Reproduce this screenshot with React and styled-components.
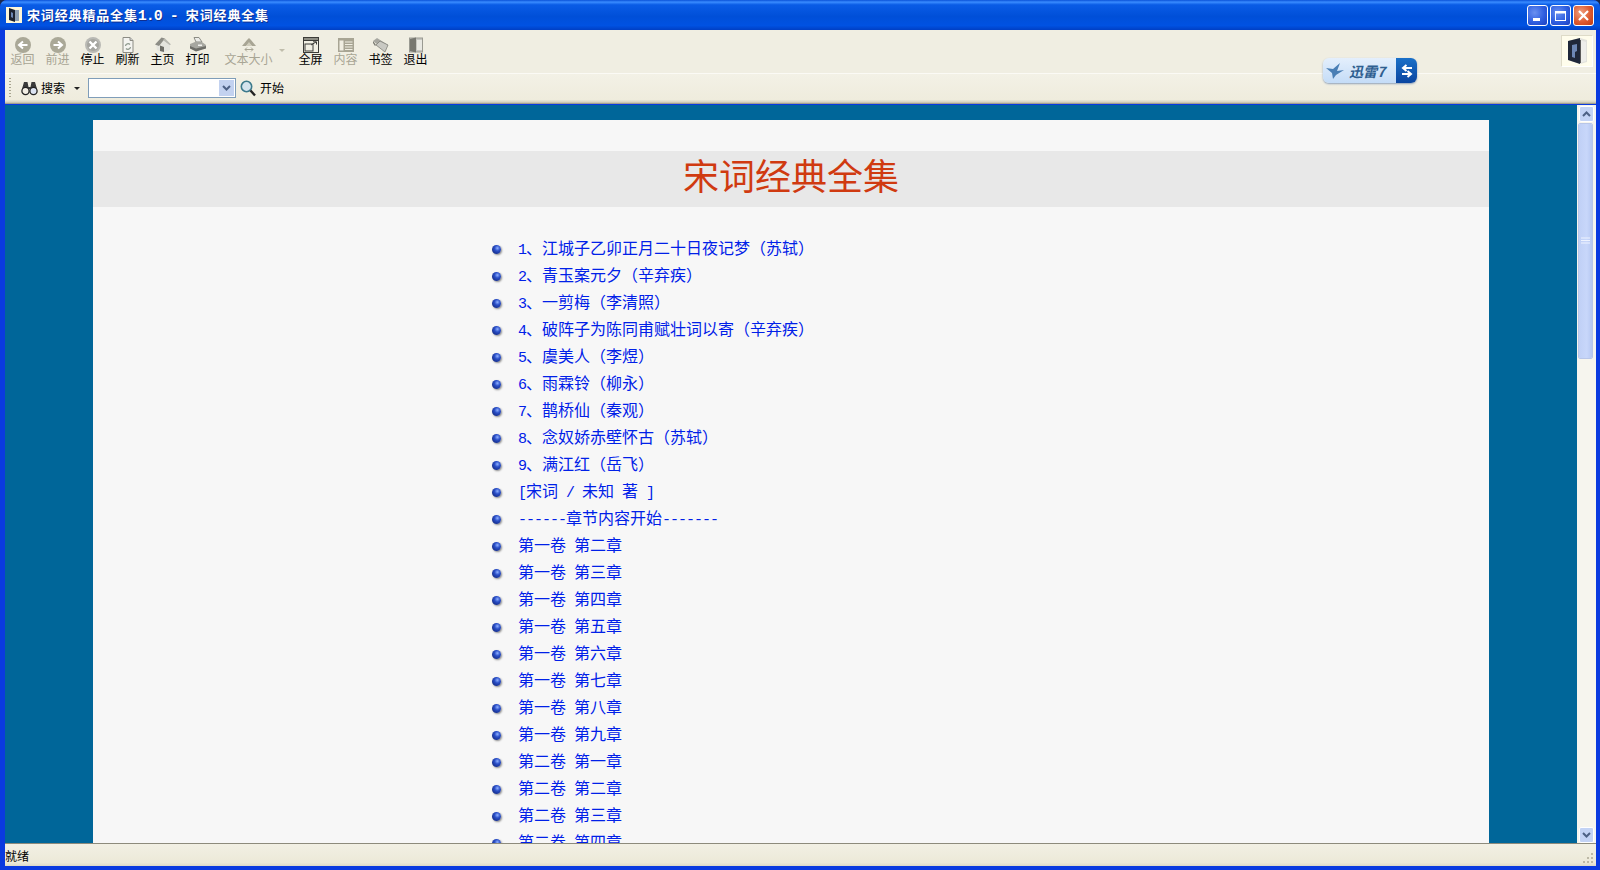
import React from 'react';
import styled, { createGlobalStyle } from 'styled-components';

const GlobalStyle = createGlobalStyle`
  html, body {
    margin: 0;
    padding: 0;
    overflow: hidden;
    background: #1a2a50;
  }
`;

const FONT = `"Noto Sans CJK SC", "Liberation Sans", sans-serif`;

const Window = styled.div`
  position: relative;
  width: 1600px;
  height: 870px;
  display: flex;
  flex-direction: column;
  background: #0a3ae0;
  border-radius: 7px 7px 0 0;
  font-family: ${FONT};
  overflow: hidden;
`;

const TitleBar = styled.div`
  height: 30px;
  flex: none;
  display: flex;
  align-items: center;
  padding: 0 6px;
  background: linear-gradient(180deg, #0a52d8 0%, #3a8cff 7%, #0a5ce6 16%, #004fd8 55%, #0052e2 85%, #003fc4 100%);
`;

const TitleText = styled.div`
  margin-left: 5px;
  font-size: 13px;
  letter-spacing: 0.85px;
  color: #fff;
  font-weight: 700;
  white-space: pre;
  text-shadow: 1px 1px 0 #0f2f90;
`;

const Controls = styled.div`
  margin-left: auto;
  display: flex;
  gap: 2px;
`;

const ControlButton = styled.div`
  width: 21px;
  height: 21px;
  border: 1px solid #fff;
  border-radius: 3px;
  box-sizing: border-box;
  display: flex;
  align-items: center;
  justify-content: center;
  background: ${p => p.$close
    ? 'radial-gradient(circle at 35% 35%, #f0a080 0%, #dd5a30 55%, #c03a10 100%)'
    : 'radial-gradient(circle at 35% 35%, #6a90f0 0%, #2f5fe0 55%, #1c40c0 100%)'};
`;

const Frame = styled.div`
  flex: 1;
  min-height: 0;
  display: flex;
  flex-direction: column;
  margin: 0 4px 4px 5px;
`;

const ToolRow = styled.div`
  height: 44px;
  flex: none;
  display: flex;
  align-items: flex-start;
  box-sizing: border-box;
  background: #f0eee2;
  border-bottom: 1px solid #fbfaf5;
`;

const ToolButton = styled.div`
  width: ${p => p.$wide ? '67px' : '35px'};
  flex: none;
  display: flex;
  flex-direction: column;
  align-items: center;
  padding-top: 7px;
  font-size: 12px;
  line-height: 14px;
  color: ${p => p.$off ? '#a8a594' : '#000'};
`;

const ToolIcon = styled.svg`
  width: 18px;
  height: 16px;
  display: block;
  margin-bottom: -1px;
`;

const SplitCaret = styled.div`
  flex: none;
  width: 6px;
  height: 3px;
  box-sizing: border-box;
  margin: 19px 8px 0 -3px;
  border: 3px solid transparent;
  border-top-color: #c0bdac;
  border-bottom: 0;
`;

const Brand = styled.div`
  margin: 5px 3px 0 auto;
  width: 32px;
  height: 32px;
  background: #fffdec;
  border: 1px solid #dedbc8;
  border-right-color: #fff;
  border-bottom-color: #fff;
  box-sizing: border-box;
  display: flex;
  align-items: center;
  justify-content: center;
`;

const SearchRow = styled.div`
  height: 30px;
  flex: none;
  display: flex;
  align-items: center;
  box-sizing: border-box;
  padding: 0 0 2px 4px;
  background: linear-gradient(180deg, #f3f1e6 0%, #efecdd 85%, #d8d4c0 94%, #8f8c7c 100%);
  font-size: 12px;
`;

const Grip = styled.div`
  width: 2px;
  height: 21px;
  margin-right: 10px;
  background: repeating-linear-gradient(180deg, #a8a590 0 1px, transparent 1px 3px);
`;

const SearchLabel = styled.span`
  margin-left: 3px;
  line-height: 16px;
`;

const Caret = styled.div`
  margin: 0 8px 0 9px;
  border: 3px solid transparent;
  border-top-color: #222;
  border-bottom: 0;
`;

const Combo = styled.div`
  width: 148px;
  height: 20px;
  box-sizing: border-box;
  background: #fff;
  border: 1px solid #7f9db9;
  display: flex;
  justify-content: flex-end;
  padding: 1px;
`;

const ComboButton = styled.div`
  width: 15px;
  background: #c3d2f0;
  display: flex;
  align-items: center;
  justify-content: center;
`;

const StartIcon = styled.svg`
  width: 16px;
  height: 17px;
  margin: 0 1px 0 4px;
`;

const Body = styled.div`
  flex: 1;
  min-height: 0;
  display: flex;
  margin-top: 1px;
`;

const Viewport = styled.div`
  flex: 1;
  min-width: 0;
  overflow: hidden;
  background: #006699;
  padding-top: 15px;
  display: flex;
  justify-content: center;
`;

const Page = styled.div`
  width: 1396px;
  flex: none;
  background: #f7f7f7;
  padding-top: 31px;
`;

const Heading = styled.div`
  height: 56px;
  background: #e8e8e8;
  color: #d03a10;
  font-size: 36px;
  line-height: 46px;
  text-align: center;
`;

const List = styled.ul`
  list-style: none;
  margin: 26px 0 0;
  padding: 0 0 0 399px;
`;

const Row = styled.li`
  height: 27px;
  display: flex;
  align-items: center;
  font-size: 16px;
  color: #0020e8;
  white-space: pre;
`;

const Bullet = styled.span`
  width: 9px;
  height: 9px;
  margin: 6px 17px 0 0;
  flex: none;
  border-radius: 50%;
  background: radial-gradient(circle at 60% 35%, #8fb0ff 0%, #2a4fc8 35%, #0c1c68 100%);
  box-shadow: 1px 1px 2px #8a8a8a;
`;

const Half = styled.span`
  font-family: "Liberation Mono", monospace;
  font-size: 15px;
  letter-spacing: -1px;
`;

const ScrollBar = styled.div`
  width: 19px;
  flex: none;
  display: flex;
  flex-direction: column;
  background: #f6f5ee;
  padding-left: 1px;
  box-sizing: border-box;
`;

const ScrollButton = styled.div`
  height: 16px;
  width: 15px;
  flex: none;
  margin: 1px 0 0 1px;
  border: 1px solid #fff;
  border-radius: 2px;
  background: #c3d3f5;
  display: flex;
  align-items: center;
  justify-content: center;
  box-sizing: border-box;
`;

const Thumb = styled.div`
  height: 236px;
  width: 15px;
  margin-top: 1px;
  box-sizing: border-box;
  border: 1px solid #fff;
  outline: 1px solid #b8c6e8;
  outline-offset: -1px;
  border-radius: 2px;
  background: linear-gradient(90deg, #c0d0f6, #c8d7fa 60%, #b6c8f2);
  display: flex;
  align-items: center;
  justify-content: center;
`;

const Track = styled.div`
  flex: 1;
`;

const StatusBar = styled.div`
  height: 23px;
  flex: none;
  display: flex;
  align-items: center;
  box-sizing: border-box;
  border-top: 1px solid #8d8b7c;
  background: linear-gradient(180deg, #f2f0e4 0%, #ece9d8 85%, #dcd9c8 100%);
  font-size: 12px;
  color: #000;
`;

const SizeGrip = styled.svg`
  width: 12px;
  height: 12px;
  margin: 6px 2px 0 auto;
`;

const Badge = styled.div`
  position: absolute;
  left: 1323px;
  top: 58px;
  width: 94px;
  height: 25px;
  display: flex;
  border-radius: 6px;
  overflow: hidden;
  box-shadow: 0 1px 2px #8fa0b8;
`;

const BadgeLabel = styled.div`
  flex: 1;
  display: flex;
  align-items: center;
  padding-left: 3px;
  gap: 3px;
  background: linear-gradient(180deg, #e4effc, #c4dcf7);
  font-size: 14px;
  line-height: 14px;
  font-weight: 700;
  font-style: italic;
  color: #2f5f90;
`;

const BadgeSwap = styled.div`
  width: 21px;
  display: flex;
  align-items: center;
  justify-content: center;
  background: linear-gradient(180deg, #1a70c8, #0a45a0);
`;

const TitleGlyph = () => (
  <svg width="16" height="16" viewBox="0 0 16 16">
    <rect width="16" height="16" fill="#fdf6d8" />
    <path d="M3 1 L9 3 V15 L3 13Z" fill="#1c2230" />
    <path d="M9 3 H13 V14 H9Z" fill="#8fa0b4" />
    <path d="M5 5 L7 6 V11 L5 10Z" fill="#6d87b5" />
  </svg>
);

const BrandGlyph = () => (
  <svg width="24" height="28" viewBox="0 0 24 28">
    <path d="M3 4 L15 1 L22 3 V25 L15 27 L3 23Z" fill="#e2e2dc" />
    <path d="M3 4 L15 1 V27 L3 23Z" fill="#20283a" />
    <path d="M7 8 L12 7 V14 L10 15 V21 L7 20Z" fill="#6d87b5" />
    <path d="M15 3 L21 5 V24 L15 26Z" fill="#eeeeea" />
    <path d="M15 3 L16 3 V26 L15 26Z" fill="#5a5a5a" />
  </svg>
);

const BackIcon = () => (
  <ToolIcon viewBox="0 0 18 16">
    <circle cx="9" cy="8" r="8" fill="#aaa897" />
    <path d="M13.5 8 H6 M9 4.5 L5 8 L9 11.5" stroke="#fff" strokeWidth="2" fill="none" />
  </ToolIcon>
);

const ForwardIcon = () => (
  <ToolIcon viewBox="0 0 18 16">
    <circle cx="9" cy="8" r="8" fill="#aaa897" />
    <path d="M4.5 8 H12 M9 4.5 L13 8 L9 11.5" stroke="#fff" strokeWidth="2" fill="none" />
  </ToolIcon>
);

const StopIcon = () => (
  <ToolIcon viewBox="0 0 18 16">
    <circle cx="9" cy="8" r="8" fill="#b9b9b4" />
    <circle cx="9" cy="8" r="6" fill="#a5a5a0" />
    <path d="M5.5 4.5 L12.5 11.5 M12.5 4.5 L5.5 11.5" stroke="#fff" strokeWidth="2.4" />
  </ToolIcon>
);

const RefreshIcon = () => (
  <ToolIcon viewBox="0 0 18 16">
    <path d="M4 .5 H11 L14 3.5 V15.5 H4Z" fill="#f4f4f0" stroke="#8c8c84" />
    <path d="M11 .5 V3.5 H14" fill="#ccc" stroke="#8c8c84" />
    <path d="M6.5 9 A2.6 2.6 0 0 1 11 7.5 M11.5 10 A2.6 2.6 0 0 1 7 11.5" stroke="#8f9a8e" strokeWidth="1.3" fill="none" />
  </ToolIcon>
);

const HomeIcon = () => (
  <ToolIcon viewBox="0 0 18 16">
    <path d="M2 8 L9 1 L16 7 V13 L9 15.5 L3 13Z" fill="#e4e4de" />
    <path d="M1 7.5 L7.5 .5 L11 1.5 L5 9Z" fill="#8d8d86" />
    <path d="M11 1.5 L17 7.5 L15.5 8 L9 3Z" fill="#b7b7b0" />
    <path d="M6 8.5 L10 10 V15 L6 14Z" fill="#6c6c66" />
  </ToolIcon>
);

const PrintIcon = () => (
  <ToolIcon viewBox="0 0 18 16">
    <path d="M5 .5 H10 L13 5 H7Z" fill="#ecece8" stroke="#8c8c84" />
    <path d="M1 7 L6 5 H13 L17 8 V11 L7 14 L1 11Z" fill="#a7a7a0" />
    <path d="M1 9 L7 11.5 L17 9 V11.5 L7 14.5 L1 11.5Z" fill="#6e6e68" />
    <rect x="9" y="7.5" width="4" height="1.5" fill="#f2f2ee" />
  </ToolIcon>
);

const TextSizeIcon = () => (
  <ToolIcon viewBox="0 0 18 16">
    <path d="M2 9 L7 3 L9 1 L11 3 L16 9 H12 L9 6 L6 9Z" fill="#a8a594" />
    <path d="M6 9 L9 5 L12 9Z" fill="#cfccbb" />
    <path d="M5 12.5 H13 M5 12.5 L7 10.5 M5 12.5 L7 14.5 M13 12.5 L11 10.5 M13 12.5 L11 14.5" stroke="#a8a594" fill="none" />
  </ToolIcon>
);

const FullIcon = () => (
  <ToolIcon viewBox="0 0 18 16">
    <rect x="1.5" y="0.5" width="15" height="15" fill="#f2f0e4" stroke="#3c3c38" />
    <rect x="1.5" y="0.5" width="15" height="3" fill="#8d8d84" stroke="#3c3c38" />
    <rect x="3" y="7" width="8" height="7" fill="none" stroke="#3c3c38" />
    <path d="M9 8 L14 5 M11 4.8 H14.5 V7.5" stroke="#3c3c38" fill="none" />
  </ToolIcon>
);

const ContentsIcon = () => (
  <ToolIcon viewBox="0 0 18 16">
    <rect x="1" y="1" width="16" height="14" fill="#a8a594" />
    <rect x="2.5" y="3.5" width="4" height="10" fill="#f0eee2" />
    <path d="M8 5 H15.5 M8 7.5 H15.5 M8 10 H15.5 M8 12.5 H15.5" stroke="#f0eee2" />
  </ToolIcon>
);

const BookmarkIcon = () => (
  <ToolIcon viewBox="0 0 18 16">
    <path d="M1 4 L5 1 L16 8 L12 13Z" fill="#a7a7a0" />
    <path d="M4 8 L8 4 L16 8 L13 15Z" fill="#c9c9c3" stroke="#777770" strokeWidth=".7" />
    <path d="M1 4 L4 8 L3 9 L1 6Z" fill="#777770" />
  </ToolIcon>
);

const ExitIcon = () => (
  <ToolIcon viewBox="0 0 18 16">
    <rect x="2.5" y="1" width="13" height="14" fill="#c6c6c0" stroke="#9a9a92" />
    <path d="M3 2 L9 0.5 V15.5 L3 14Z" fill="#777770" />
    <rect x="10" y="3" width="5" height="10" fill="#e8e8e2" />
  </ToolIcon>
);

const Binoculars = () => (
  <svg width="17" height="15" viewBox="0 0 17 15">
    <path d="M3 1 H6.5 L7.5 6 H9.5 L10.5 1 H14 L16 8 H1Z" fill="#3a3a3a" />
    <circle cx="4.5" cy="10" r="3.6" fill="#f2eee4" stroke="#222" strokeWidth="1.3" />
    <circle cx="12.5" cy="10" r="3.6" fill="#dbe3f2" stroke="#222" strokeWidth="1.3" />
  </svg>
);

const TOOLS = [
  { label: '返回', Icon: BackIcon, off: true },
  { label: '前进', Icon: ForwardIcon, off: true },
  { label: '停止', Icon: StopIcon },
  { label: '刷新', Icon: RefreshIcon },
  { label: '主页', Icon: HomeIcon },
  { label: '打印', Icon: PrintIcon },
  { label: '文本大小', Icon: TextSizeIcon, off: true, wide: true, split: true },
  { label: '全屏', Icon: FullIcon },
  { label: '内容', Icon: ContentsIcon, off: true },
  { label: '书签', Icon: BookmarkIcon },
  { label: '退出', Icon: ExitIcon },
];

const CHAPTERS = [
  '1、江城子乙卯正月二十日夜记梦（苏轼）',
  '2、青玉案元夕（辛弃疾）',
  '3、一剪梅（李清照）',
  '4、破阵子为陈同甫赋壮词以寄（辛弃疾）',
  '5、虞美人（李煜）',
  '6、雨霖铃（柳永）',
  '7、鹊桥仙（秦观）',
  '8、念奴娇赤壁怀古（苏轼）',
  '9、满江红（岳飞）',
  '[宋词 / 未知 著 ]',
  '------章节内容开始-------',
  '第一卷 第二章',
  '第一卷 第三章',
  '第一卷 第四章',
  '第一卷 第五章',
  '第一卷 第六章',
  '第一卷 第七章',
  '第一卷 第八章',
  '第一卷 第九章',
  '第二卷 第一章',
  '第二卷 第二章',
  '第二卷 第三章',
  '第二卷 第四章',
];

// ascii runs are half width in the original bitmap font
const mixed = text =>
  text.split(/([\x20-\x7e]+)/).map((part, i) =>
    /^[\x20-\x7e]+$/.test(part) ? <Half key={i}>{part}</Half> : part
  );

const Chevron = ({ up }) => (
  <svg width="9" height="6" viewBox="0 0 9 6">
    <path d={up ? 'M1 5 L4.5 1.5 L8 5' : 'M1 1 L4.5 4.5 L8 1'} stroke="#4d6185" strokeWidth="2" fill="none" />
  </svg>
);

function App() {
  return (
    <Window>
      <GlobalStyle />
      <TitleBar>
        <TitleGlyph />
        <TitleText>{mixed('宋词经典精品全集1.0 - 宋词经典全集')}</TitleText>
        <Controls>
          <ControlButton>
            <svg width="13" height="13" viewBox="0 0 13 13"><rect x="2" y="9" width="7" height="3" fill="#fff" /></svg>
          </ControlButton>
          <ControlButton>
            <svg width="13" height="13" viewBox="0 0 13 13"><rect x="1.5" y="2.5" width="10" height="9" fill="none" stroke="#fff" /><rect x="1" y="2" width="11" height="2.5" fill="#fff" /></svg>
          </ControlButton>
          <ControlButton $close>
            <svg width="13" height="13" viewBox="0 0 13 13"><path d="M2 2 L11 11 M11 2 L2 11" stroke="#fff" strokeWidth="2.2" /></svg>
          </ControlButton>
        </Controls>
      </TitleBar>
      <Frame>
        <ToolRow>
          {TOOLS.map(({ label, Icon, off, wide, split }) => (
            <React.Fragment key={label}>
              <ToolButton $off={off} $wide={wide}>
                <Icon />
                {label}
              </ToolButton>
              {split && <SplitCaret />}
            </React.Fragment>
          ))}
          <Brand><BrandGlyph /></Brand>
        </ToolRow>
        <SearchRow>
          <Grip />
          <Binoculars />
          <SearchLabel>搜索</SearchLabel>
          <Caret />
          <Combo>
            <ComboButton><Chevron /></ComboButton>
          </Combo>
          <StartIcon viewBox="0 0 16 17">
            <circle cx="6.5" cy="6.5" r="5.2" fill="#d5e4ee" stroke="#3d7a8c" strokeWidth="1.6" />
            <path d="M10.5 10.5 L15 15.5" stroke="#222" strokeWidth="2.4" />
          </StartIcon>
          <SearchLabel>开始</SearchLabel>
        </SearchRow>
        <Body>
          <Viewport>
            <Page>
              <Heading>宋词经典全集</Heading>
              <List>
                {CHAPTERS.map(text => (
                  <Row key={text}>
                    <Bullet />
                    <span>{mixed(text)}</span>
                  </Row>
                ))}
              </List>
            </Page>
          </Viewport>
          <ScrollBar>
            <ScrollButton><Chevron up /></ScrollButton>
            <Thumb>
              <svg width="9" height="8" viewBox="0 0 9 8"><path d="M0 1 H9 M0 3.5 H9 M0 6 H9" stroke="#eef3ff" /></svg>
            </Thumb>
            <Track />
            <ScrollButton><Chevron /></ScrollButton>
          </ScrollBar>
        </Body>
        <StatusBar>
          就绪
          <SizeGrip viewBox="0 0 12 12">
            <path d="M9 1 h2 v2 h-2z M5 5 h2 v2 h-2z M9 5 h2 v2 h-2z M1 9 h2 v2 h-2z M5 9 h2 v2 h-2z M9 9 h2 v2 h-2z" fill="#bdb9a6" />
          </SizeGrip>
        </StatusBar>
      </Frame>
      <Badge>
        <BadgeLabel>
          <svg width="20" height="16" viewBox="0 0 20 16">
            <path d="M0 5 L7 6 L14 0 L11 8 L18 7 L10 12 L7 16 L6 10Z" fill="#4a7fb5" />
          </svg>
          迅雷7
        </BadgeLabel>
        <BadgeSwap>
          <svg width="12" height="14" viewBox="0 0 12 14">
            <path d="M11 4 H3 M5.5 1 L2 4 L5.5 7 M1 10 H9 M6.5 7 L10 10 L6.5 13" stroke="#fff" strokeWidth="2" fill="none" />
          </svg>
        </BadgeSwap>
      </Badge>
    </Window>
  );
}

export default App;
